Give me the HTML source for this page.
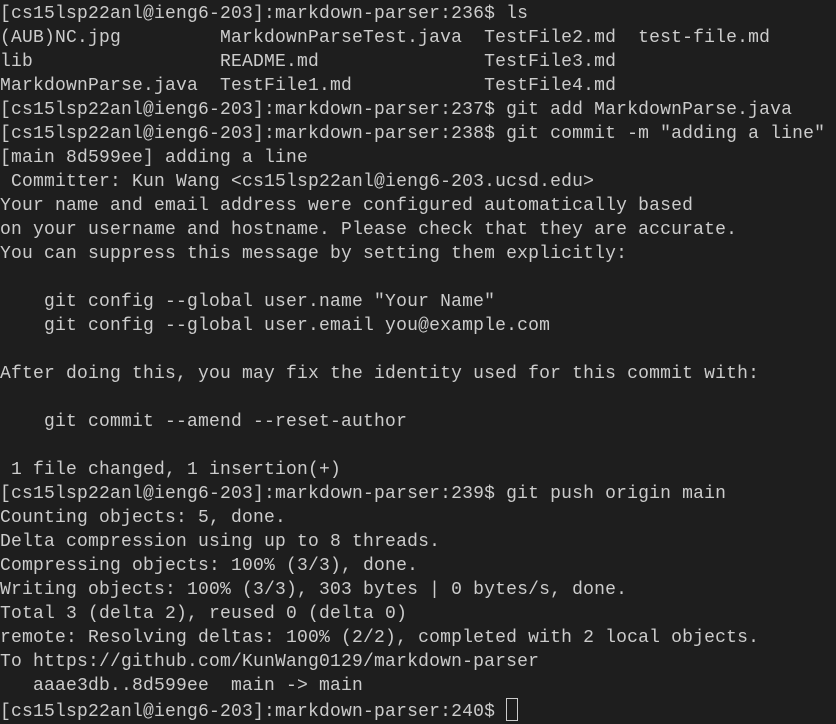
<!DOCTYPE html><html><head><style>
html,body{margin:0;background:#1e1e1e;width:836px;height:720px;overflow:hidden}
pre{margin:0;padding:0;position:absolute;top:2px;left:0;font-family:"Liberation Mono",monospace;font-size:18px;letter-spacing:0.2px;line-height:24px;color:#cccccc;white-space:pre}
.c{display:inline-block;width:10px;height:21px;border:1px solid #cccccc;vertical-align:-5px}
</style></head><body><pre>[cs15lsp22anl@ieng6-203]:markdown-parser:236$ ls
(AUB)NC.jpg         MarkdownParseTest.java  TestFile2.md  test-file.md
lib                 README.md               TestFile3.md
MarkdownParse.java  TestFile1.md            TestFile4.md
[cs15lsp22anl@ieng6-203]:markdown-parser:237$ git add MarkdownParse.java
[cs15lsp22anl@ieng6-203]:markdown-parser:238$ git commit -m "adding a line"
[main 8d599ee] adding a line
 Committer: Kun Wang &lt;cs15lsp22anl@ieng6-203.ucsd.edu&gt;
Your name and email address were configured automatically based
on your username and hostname. Please check that they are accurate.
You can suppress this message by setting them explicitly:

    git config --global user.name "Your Name"
    git config --global user.email you@example.com

After doing this, you may fix the identity used for this commit with:

    git commit --amend --reset-author

 1 file changed, 1 insertion(+)
[cs15lsp22anl@ieng6-203]:markdown-parser:239$ git push origin main
Counting objects: 5, done.
Delta compression using up to 8 threads.
Compressing objects: 100% (3/3), done.
Writing objects: 100% (3/3), 303 bytes | 0 bytes/s, done.
Total 3 (delta 2), reused 0 (delta 0)
remote: Resolving deltas: 100% (2/2), completed with 2 local objects.
To https://github.com/KunWang0129/markdown-parser
   aaae3db..8d599ee  main -&gt; main
[cs15lsp22anl@ieng6-203]:markdown-parser:240$ <span class="c"></span></pre></body></html>
